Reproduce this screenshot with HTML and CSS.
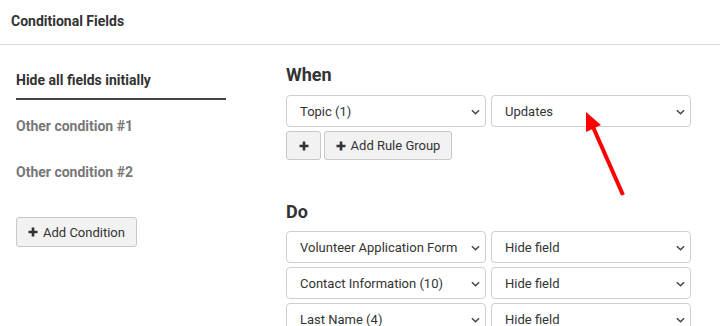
FILE: index.html
```html
<!DOCTYPE html>
<html>
<head>
<meta charset="utf-8">
<link rel="stylesheet" href="styles.css">
</head>
<body>
<div class="page">
  <header class="topbar">Conditional Fields</header>
  <div class="main">
    <nav class="tabs">
      <div class="tab active">Hide all fields initially</div>
      <div class="tab">Other condition #1</div>
      <div class="tab">Other condition #2</div>
      <button class="btn add-cond"><svg class="plus" viewBox="0 0 10 10"><path d="M5 0.5v9M0.5 5h9"/></svg>Add Condition</button>
    </nav>
    <section class="rules">
      <h2 class="title">When</h2>
      <div class="row">
        <div class="select"><span>Topic (1)</span><svg class="chev" viewBox="0 0 10 6"><path d="M1 1l4 4 4-4"/></svg></div>
        <div class="select"><span>Updates</span><svg class="chev" viewBox="0 0 10 6"><path d="M1 1l4 4 4-4"/></svg></div>
      </div>
      <div class="btnrow">
        <button class="btn small"><svg class="plus" viewBox="0 0 10 10"><path d="M5 0.5v9M0.5 5h9"/></svg></button>
        <button class="btn group"><svg class="plus" viewBox="0 0 10 10"><path d="M5 0.5v9M0.5 5h9"/></svg>Add Rule Group</button>
      </div>
      <h2 class="title do">Do</h2>
      <div class="rows">
        <div class="row">
          <div class="select"><span>Volunteer Application Form</span><svg class="chev" viewBox="0 0 10 6"><path d="M1 1l4 4 4-4"/></svg></div>
          <div class="select"><span>Hide field</span><svg class="chev" viewBox="0 0 10 6"><path d="M1 1l4 4 4-4"/></svg></div>
        </div>
        <div class="row">
          <div class="select"><span>Contact Information (10)</span><svg class="chev" viewBox="0 0 10 6"><path d="M1 1l4 4 4-4"/></svg></div>
          <div class="select"><span>Hide field</span><svg class="chev" viewBox="0 0 10 6"><path d="M1 1l4 4 4-4"/></svg></div>
        </div>
        <div class="row">
          <div class="select"><span>Last Name (4)</span><svg class="chev" viewBox="0 0 10 6"><path d="M1 1l4 4 4-4"/></svg></div>
          <div class="select"><span>Hide field</span><svg class="chev" viewBox="0 0 10 6"><path d="M1 1l4 4 4-4"/></svg></div>
        </div>
      </div>
    </section>
  </div>
  <svg class="arrow" width="720" height="326" viewBox="0 0 720 326">
    <line x1="623" y1="195" x2="593" y2="127" stroke="#ff0000" stroke-width="4"/>
    <polygon points="586,112 586,132 601,125" fill="#ff0000"/>
  </svg>
</div>
</body>
</html>
```

FILE: styles.css
```css
* { box-sizing: border-box; }
html, body { margin: 0; padding: 0; background: #fff; }
body {
  font-family: Roboto, "Liberation Sans", sans-serif;
  color: #333;
  width: 720px;
  height: 326px;
  overflow: hidden;
}
.page { position: relative; width: 720px; height: 326px; }
.topbar {
  height: 45px;
  padding: 13px 11px 0;
  font-size: 14px;
  font-weight: 700;
  line-height: 17px;
  color: #333;
  border-bottom: 1px solid #dcdce0;
}
.main { display: flex; }
.tabs {
  width: 226px;
  padding: 9px 0 0 16px;
  display: flex;
  flex-direction: column;
  align-items: flex-start;
}
.tab {
  width: 210px;
  padding: 18px 0 10px;
  font-size: 14px;
  font-weight: 700;
  line-height: 16px;
  color: #777;
  border-bottom: 2px solid transparent;
}
.tab.active { color: #333; border-bottom-color: #444; }
.btn {
  display: inline-flex;
  align-items: center;
  justify-content: center;
  gap: 5px;
  font-family: Roboto, "Liberation Sans", sans-serif;
  font-size: 13px;
  color: #333;
  background: #f2f2f2;
  border: 1px solid #c8c8c8;
  border-radius: 3px;
  padding: 0;
}
.plus { width: 10px; height: 10px; }
.plus path { stroke: #333; stroke-width: 2.6; fill: none; }
.add-cond { margin-top: 25px; width: 121px; height: 30px; }
.rules { margin-left: 60px; padding-top: 20px; }
.title {
  margin: 0;
  font-size: 18px;
  font-weight: 700;
  line-height: 20px;
  color: #333;
}
.row { display: flex; gap: 5px; margin-top: 10px; }
.rows { margin-top: 9px; display: flex; flex-direction: column; gap: 4px; }
.rows .row { margin-top: 0; }
.select {
  width: 200px;
  height: 32px;
  border: 1px solid #cfcfcf;
  border-radius: 4px;
  background: #fff;
  display: flex;
  align-items: center;
  justify-content: space-between;
  padding: 1px 5px 0 13px;
  font-size: 13px;
  color: #333;
}
.chev { width: 9px; height: 6px; }
.chev path { stroke: #444; stroke-width: 1.6; fill: none; }
.btnrow { display: flex; gap: 3px; margin-top: 4px; }
.small { width: 35px; height: 29px; }
.group { width: 128px; height: 29px; }
.title.do { margin-top: 42px; }
.arrow { position: absolute; left: 0; top: 0; pointer-events: none; }
```
